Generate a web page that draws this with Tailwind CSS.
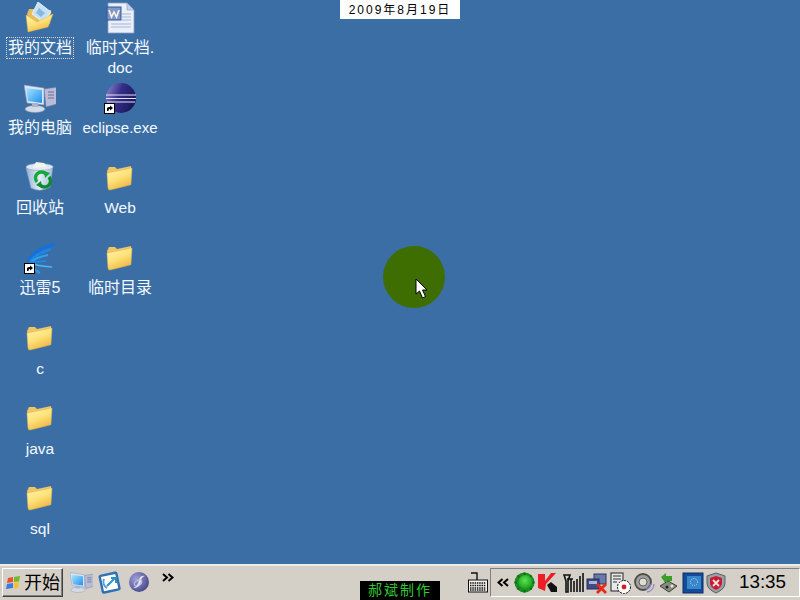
<!DOCTYPE html>
<html lang="zh-CN">
<head>
  <meta charset="UTF-8">
  <title>Desktop</title>
  <script src="https://cdn.jsdelivr.net/npm/@tailwindcss/browser@4"></script>
</head>
<body class="w-[800px] h-[600px] overflow-hidden flex flex-col bg-[#3a6ea5] font-['Liberation_Sans','Noto_Sans_CJK_SC',sans-serif]">
  <svg class="absolute w-0 h-0">
    <defs>
      <linearGradient id="fold" x1="0" y1="0" x2="0.5" y2="1">
        <stop offset="0" stop-color="#fff5b0"/><stop offset="0.55" stop-color="#fde27a"/><stop offset="1" stop-color="#f0b844"/>
      </linearGradient>
      <linearGradient id="screen" x1="0" y1="0" x2="1" y2="1">
        <stop offset="0" stop-color="#a8e6ff"/><stop offset="1" stop-color="#1f8ff0"/>
      </linearGradient>
      <linearGradient id="bin" x1="0" y1="0" x2="1" y2="0">
        <stop offset="0" stop-color="#8fb0d8"/><stop offset="0.5" stop-color="#e2ecf6"/><stop offset="1" stop-color="#a4bedc"/>
      </linearGradient>
      <linearGradient id="eclipse" x1="0" y1="0" x2="1" y2="0.4">
        <stop offset="0" stop-color="#9a8cd8"/><stop offset="0.5" stop-color="#34308a"/><stop offset="1" stop-color="#1b1860"/>
      </linearGradient>
      <radialGradient id="ball" cx="0.45" cy="0.4" r="0.6">
        <stop offset="0" stop-color="#62e052"/><stop offset="1" stop-color="#14a01c"/>
      </radialGradient>
      <radialGradient id="ie" cx="0.35" cy="0.35" r="0.8">
        <stop offset="0" stop-color="#a0a0d8"/><stop offset="1" stop-color="#3c3c80"/>
      </radialGradient>
      <symbol id="folder" viewBox="0 0 32 32">
        <path d="M3 9 L5 5 H11 L13 7 L27 4 V21 L5 27 Z" fill="#edc564"/>
        <path d="M3 11 L28 6 L27 22 Q27 23 26 23 L6 28 Q4 28 4 26 Z" fill="url(#fold)" stroke="#e0b450" stroke-width="0.5"/>
      </symbol>
      <symbol id="shortcut" viewBox="0 0 11 11">
        <rect x="0.5" y="0.5" width="10" height="10" fill="#fff" stroke="#000"/>
        <path d="M3 8 V5.5 Q3 4 5 4 H6 V2.5 L9 5 L6 7.5 V6 H5.5 Q4.5 6 4.5 8 Z" fill="#000"/>
      </symbol>
      <symbol id="mypc" viewBox="0 0 32 32">
        <path d="M20 7 L33 5 V22 L22 25 Z" fill="#b8bcd8" stroke="#7078a0" stroke-width="0.6"/>
        <path d="M24 10 H30 M24 13 H30 M24 16 H30" stroke="#6a7098"/>
        <path d="M0 3 L20 6 V23 L3 21 Z" fill="#dbe6f6" stroke="#8090b0" stroke-width="0.6"/>
        <path d="M2 6 L18 8 V21 L4 19 Z" fill="url(#screen)"/>
        <ellipse cx="11" cy="27" rx="10" ry="3.5" fill="#d4dbe8" stroke="#8090a8" stroke-width="0.5"/>
        <rect x="8" y="21" width="6" height="4" fill="#aab4c8"/>
      </symbol>
    </defs>
  </svg>

  <main class="relative flex-1">
    <div class="grid grid-flow-col grid-cols-[80px_80px] grid-rows-[repeat(7,80px)] text-[15.5px] leading-[20px] text-[#f4f9ff] text-center">

      <div class="flex flex-col items-center pt-[2px]">
        <svg class="w-8 h-8 shrink-0" viewBox="0 0 32 32">
          <path d="M3 12 L5 7 L10 7 L13 9 L27 8 L26 22 L8 28 Z" fill="#e8bc58"/>
          <path d="M8 12 L14 0 L27 10 L19 20 Z" fill="#c4e2f4" stroke="#f4fbff" stroke-width="0.8"/>
          <path d="M12 11 L15 6 L21 11 L17 15 Z" fill="#86b8e0"/>
          <path d="M2 13 L13 20 L29 12 L24 25 L4 30 Z" fill="url(#fold)" stroke="#e0b450" stroke-width="0.5"/>
        </svg>
        <span class="mt-[4px] px-[1px] text-[16px] outline-1 outline-dotted outline-[#d8d8d8]">我的文档</span>
      </div>
      <div class="flex flex-col items-center pt-[2px]">
        <svg class="w-8 h-8 shrink-0 overflow-visible" viewBox="0 0 32 32">
          <use href="#mypc"/>
        </svg>
        <span class="mt-[4px] text-[16px]">我的电脑</span>
      </div>
      <div class="flex flex-col items-center pt-[2px]">
        <svg class="w-8 h-8 shrink-0" viewBox="0 0 32 32">
          <path d="M2 6 Q15 0 29 4 L26 25 Q17 31 7 26 Z" fill="url(#bin)" stroke="#7f9cc0" stroke-width="0.6"/>
          <ellipse cx="15.5" cy="5" rx="13.5" ry="3.5" fill="#dfe9f2" stroke="#8ba3c0" stroke-width="0.6"/>
          <path d="M9 6 L12 0 L20 1 L23 5 Z" fill="#f4f4ec"/>
          <path d="M13 20 A6 6 0 0 1 22 12" fill="none" stroke="#16a838" stroke-width="3.4"/>
          <path d="M20 9 L26 11 L21 16 Z" fill="#16a838"/>
          <path d="M25 15 A6 6 0 0 1 16 23" fill="none" stroke="#0e8c2c" stroke-width="3.4"/>
          <path d="M18 26 L12 23 L17 19 Z" fill="#0e8c2c"/>
        </svg>
        <span class="mt-[4px] text-[16px]">回收站</span>
      </div>
      <div class="flex flex-col items-center pt-[2px]">
        <svg class="w-8 h-8 shrink-0" viewBox="0 0 32 32" fill="none">
          <path d="M4 20 Q9 8 31 2" stroke="#1470dc" stroke-width="3"/>
          <path d="M6 19 Q12 12 27 7" stroke="#1c86e8" stroke-width="2.4"/>
          <path d="M7 20 Q13 15 24 13" stroke="#30a0f0" stroke-width="2"/>
          <path d="M6 20 Q10 24 28 25" stroke="#48b8f4" stroke-width="1.6"/>
          <path d="M6 21 Q9 27 16 31" stroke="#2c98ec" stroke-width="2.4"/>
          <path d="M6 20 Q13 20 22 19" stroke="#2088e4" stroke-width="2"/>
          <use href="#shortcut" x="0" y="21" width="11" height="11"/>
        </svg>
        <span class="mt-[4px] text-[16px]">迅雷5</span>
      </div>
      <div class="flex flex-col items-center pt-[2px]">
        <svg class="w-8 h-8 shrink-0"><use href="#folder"/></svg>
        <span class="mt-[5px]">c</span>
      </div>
      <div class="flex flex-col items-center pt-[2px]">
        <svg class="w-8 h-8 shrink-0"><use href="#folder"/></svg>
        <span class="mt-[5px]">java</span>
      </div>
      <div class="flex flex-col items-center pt-[2px]">
        <svg class="w-8 h-8 shrink-0"><use href="#folder"/></svg>
        <span class="mt-[5px]">sql</span>
      </div>

      <div class="flex flex-col items-center pt-[2px]">
        <svg class="w-8 h-8 shrink-0" viewBox="0 0 32 32">
          <path d="M4 1 H23 L30 8 V31 H4 Z" fill="#eaf0fa" stroke="#8c9cc0" stroke-width="0.8"/>
          <path d="M23 1 V8 H30 Z" fill="#c4d2ea" stroke="#8c9cc0" stroke-width="0.6"/>
          <path d="M18 12 H27 M18 15 H27 M18 18 H27 M7 22 H27 M7 25 H27" stroke="#a8b6d4"/>
          <rect x="3" y="5" width="14" height="13" fill="#7c98cc" stroke="#34549c"/>
          <path d="M5 8 L7.5 15 L10 10 L12.5 15 L15 8" fill="none" stroke="#fdf6d8" stroke-width="1.6"/>
        </svg>
        <span class="mt-[4px] text-[16px]">临时文档.<br><span class="text-[15.5px]">doc</span></span>
      </div>
      <div class="flex flex-col items-center pt-[2px]">
        <svg class="w-8 h-8 shrink-0" viewBox="0 0 32 32">
          <circle cx="17" cy="16" r="15" fill="url(#eclipse)"/>
          <path d="M2 13 H32 M2 16.5 H32 M3 20 H31" stroke="#e4e4f8" stroke-width="1.2"/>
          <use href="#shortcut" x="0" y="21" width="11" height="11"/>
        </svg>
        <span class="mt-[4px] whitespace-nowrap text-[15px]">eclipse.exe</span>
      </div>
      <div class="flex flex-col items-center pt-[2px]">
        <svg class="w-8 h-8 shrink-0"><use href="#folder"/></svg>
        <span class="mt-[4px]">Web</span>
      </div>
      <div class="flex flex-col items-center pt-[2px]">
        <svg class="w-8 h-8 shrink-0"><use href="#folder"/></svg>
        <span class="mt-[4px] text-[16px]">临时目录</span>
      </div>
    </div>

    <div class="absolute left-[340px] top-0 w-[120px] h-[19px] bg-white text-black text-[12px] leading-[20px] tracking-[2px] text-center">2009年8月19日</div>

    <div class="absolute left-[383px] top-[246px] w-[62px] h-[62px] rounded-full bg-[#3e6d02]"></div>
    <svg class="absolute left-[415px] top-[278px] w-[13px] h-[21px]" viewBox="0 0 13 21">
      <path d="M1 1 V16 L4.5 13 L7.5 20 L10.5 18.5 L7.5 12 H12 Z" fill="#fff" stroke="#000" stroke-width="1"/>
    </svg>
  </main>

  <footer class="h-[36px] shrink-0 bg-[#d4d0c8] border-t-2 border-t-[#eeece6] flex items-stretch pl-[2px] text-black">
    <div class="w-[61px] h-[29px] mt-[2px] flex items-center gap-[2px] pl-[3px] pt-[1px] bg-[#d4d0c8] border border-t-white border-l-white border-r-[#404040] border-b-[#404040] shadow-[inset_-1px_-1px_0_#808080] text-[18px]">
      <svg class="w-[16px] h-[16px] shrink-0" viewBox="0 0 16 16">
        <path d="M2 3 L7 2 V7 L1 8 Z" fill="#e8542a"/>
        <path d="M8 2 L14 1 L13 6.5 L8 7 Z" fill="#74b82c"/>
        <path d="M1 9 L7 8 V13 L0 14 Z" fill="#3c7ce0"/>
        <path d="M8 8 L13 7.5 L12 13 L8 13.5 Z" fill="#f8c020"/>
      </svg>
      <span>开始</span>
    </div>

    <div class="flex items-center ml-[7px] mt-[1px] h-[29px]">
      <svg class="w-[23px] h-[24px]" viewBox="0 0 32 32"><use href="#mypc"/></svg>
      <svg class="w-[24px] h-[24px] ml-[5px]" viewBox="0 0 24 24">
        <rect x="3" y="4" width="17" height="17" rx="1" fill="#fff" stroke="#2f6fb4" stroke-width="2.4" transform="rotate(-12 12 12)"/>
        <path d="M9 16 L17 8 M13 8 H18 V13" fill="none" stroke="#2f8fc4" stroke-width="2"/>
        <path d="M6 9 A7 7 0 0 0 9 18" fill="none" stroke="#5f9fd4" stroke-width="2"/>
      </svg>
      <svg class="w-[22px] h-[22px] ml-[6px]" viewBox="0 0 22 22">
        <circle cx="11" cy="11" r="10" fill="url(#ie)"/>
        <path d="M5 17 Q10 15 11 9 Q12 4 17 5 Q13 6 13 11 Q12 17 5 17 Z" fill="#e0e0f4"/>
        <ellipse cx="10" cy="12" rx="4" ry="2.5" fill="none" stroke="#c8c8ec" transform="rotate(-30 10 12)"/>
      </svg>
      <svg class="w-[12px] h-[9px] ml-[12px] mb-[9px]" viewBox="0 0 12 9" fill="none" stroke="#000" stroke-width="2">
        <path d="M1 1 L5 4.5 L1 8 M6.5 1 L10.5 4.5 L6.5 8"/>
      </svg>
    </div>

    <div class="self-end ml-[186px] w-[80px] h-[19px] bg-black text-[#32c832] text-[14px] leading-[19px] tracking-[2px] text-center">郝斌制作</div>

    <svg class="w-[20px] h-[22px] ml-[28px] mt-[6px]" viewBox="0 0 20 22">
      <path d="M3 1 H9 V8" fill="none" stroke="#111" stroke-width="1.4"/>
      <rect x="0.5" y="8" width="19" height="12" fill="#f4f2ec" stroke="#111"/>
      <path d="M2 11 H18 M2 13.5 H18 M2 16 H18 M2 18 H18" stroke="#111" stroke-width="1.4" stroke-dasharray="1.5 0.8"/>
    </svg>

    <div class="ml-[2px] flex-1 h-[29px] mt-[2px] border border-t-[#808080] border-l-[#808080] border-b-white border-r-white flex items-center pl-[6px]">
      <svg class="w-[12px] h-[9px] mr-[5px]" viewBox="0 0 12 9" fill="none" stroke="#000" stroke-width="2">
        <path d="M5.5 1 L1.5 4.5 L5.5 8 M11 1 L7 4.5 L11 8"/>
      </svg>
      <div class="flex items-center">
        <svg class="w-[21px] h-[21px]" viewBox="0 0 21 21">
          <circle cx="10.5" cy="10.5" r="10" fill="#1c8c1e"/>
          <path d="M10.5 0.5 V3 M10.5 18 V20.5 M0.5 10.5 H3 M18 10.5 H20.5 M3.5 3.5 L5 5 M16 16 L17.5 17.5 M17.5 3.5 L16 5 M5 16 L3.5 17.5" stroke="#0f6c14" stroke-width="2"/>
          <circle cx="11.5" cy="10" r="7" fill="url(#ball)"/>
        </svg>
        <svg class="w-[19px] h-[20px] ml-[3px]" viewBox="0 0 19 20">
          <path d="M0 1 H7 V8 L13 0 H18 L8 11 L7 18 L0 15 Z" fill="#ee1c24"/>
          <path d="M9 12 L13 9 L19 14 V19 H13 Z" fill="#111"/>
        </svg>
        <svg class="w-[22px] h-[21px] ml-[6px]" viewBox="0 0 22 21">
          <path d="M1 3 H7 L5 9 V20 H3 V9 Z M4 7 H10 M8 7 V20 M11 9 V20 M14 7 V20 M17 4 V20 M20 1 V20" fill="none" stroke="#111" stroke-width="1.6"/>
        </svg>
        <svg class="w-[22px] h-[22px] ml-[1px]" viewBox="0 0 22 22">
          <rect x="8" y="2" width="12" height="10" fill="#6a7aa8" stroke="#2c3660"/>
          <rect x="1" y="7" width="12" height="10" fill="#3e4c86" stroke="#232c58"/>
          <rect x="3" y="9" width="8" height="3" fill="#a8b4d8"/>
          <path d="M11 12 L20 21 M20 12 L11 21" stroke="#e82818" stroke-width="2.8"/>
        </svg>
        <svg class="w-[22px] h-[22px] ml-[1px]" viewBox="0 0 22 22">
          <rect x="2" y="1" width="12" height="18" fill="#e8e8e8" stroke="#222"/>
          <path d="M4 4 H12 M4 7 H12 M4 10 H8" stroke="#333"/>
          <circle cx="15" cy="15" r="6.5" fill="#fff" stroke="#111" stroke-dasharray="2 1"/>
          <circle cx="15" cy="15" r="2.4" fill="#e01818"/>
        </svg>
        <svg class="w-[22px] h-[22px] ml-[2px]" viewBox="0 0 22 22">
          <circle cx="10" cy="10" r="8" fill="#a0a09c" stroke="#4c4c4c" stroke-width="1.8"/>
          <circle cx="10" cy="10" r="4" fill="#dcdcd8" stroke="#606060"/>
          <path d="M14 20 A8 8 0 0 0 21 12 M13 17 A6 6 0 0 0 18 12" fill="none" stroke="#8a8ac8" stroke-width="1.3"/>
        </svg>
        <svg class="w-[22px] h-[22px] ml-[2px]" viewBox="0 0 22 22">
          <path d="M4 5 L9 1 V4 H15 V9 H9 V12 Z" fill="#38a028"/>
          <path d="M3 14 L11 9 L20 14 L12 20 Z" fill="#8a8e80" stroke="#3c4038"/>
          <circle cx="10" cy="15" r="1.5" fill="#222"/>
          <circle cx="15" cy="14" r="1.5" fill="#e8e8e0"/>
        </svg>
        <svg class="w-[22px] h-[22px] ml-[3px]" viewBox="0 0 22 22">
          <rect x="1" y="1" width="20" height="20" fill="#144c9c" stroke="#0a2a64"/>
          <rect x="5" y="4" width="14" height="13" fill="#3a86cc"/>
          <circle cx="12" cy="10" r="3.5" fill="none" stroke="#b8e0ff" stroke-dasharray="1 1.2"/>
        </svg>
        <svg class="w-[20px] h-[22px] ml-[2px]" viewBox="0 0 20 22">
          <path d="M10 1 L19 4 V11 Q19 17 10 21 Q1 17 1 11 V4 Z" fill="#9aa0a8" stroke="#5a5e66"/>
          <path d="M10 4 L16 6 V11 Q16 15 10 18 Q4 15 4 11 V6 Z" fill="#c81c30"/>
          <path d="M7 8 L13 14 M13 8 L7 14" stroke="#f4e0e0" stroke-width="1.8"/>
        </svg>
      </div>
      <span class="ml-auto mr-[13px] text-[18.8px] leading-none">13:35</span>
    </div>
  </footer>
</body>
</html>
